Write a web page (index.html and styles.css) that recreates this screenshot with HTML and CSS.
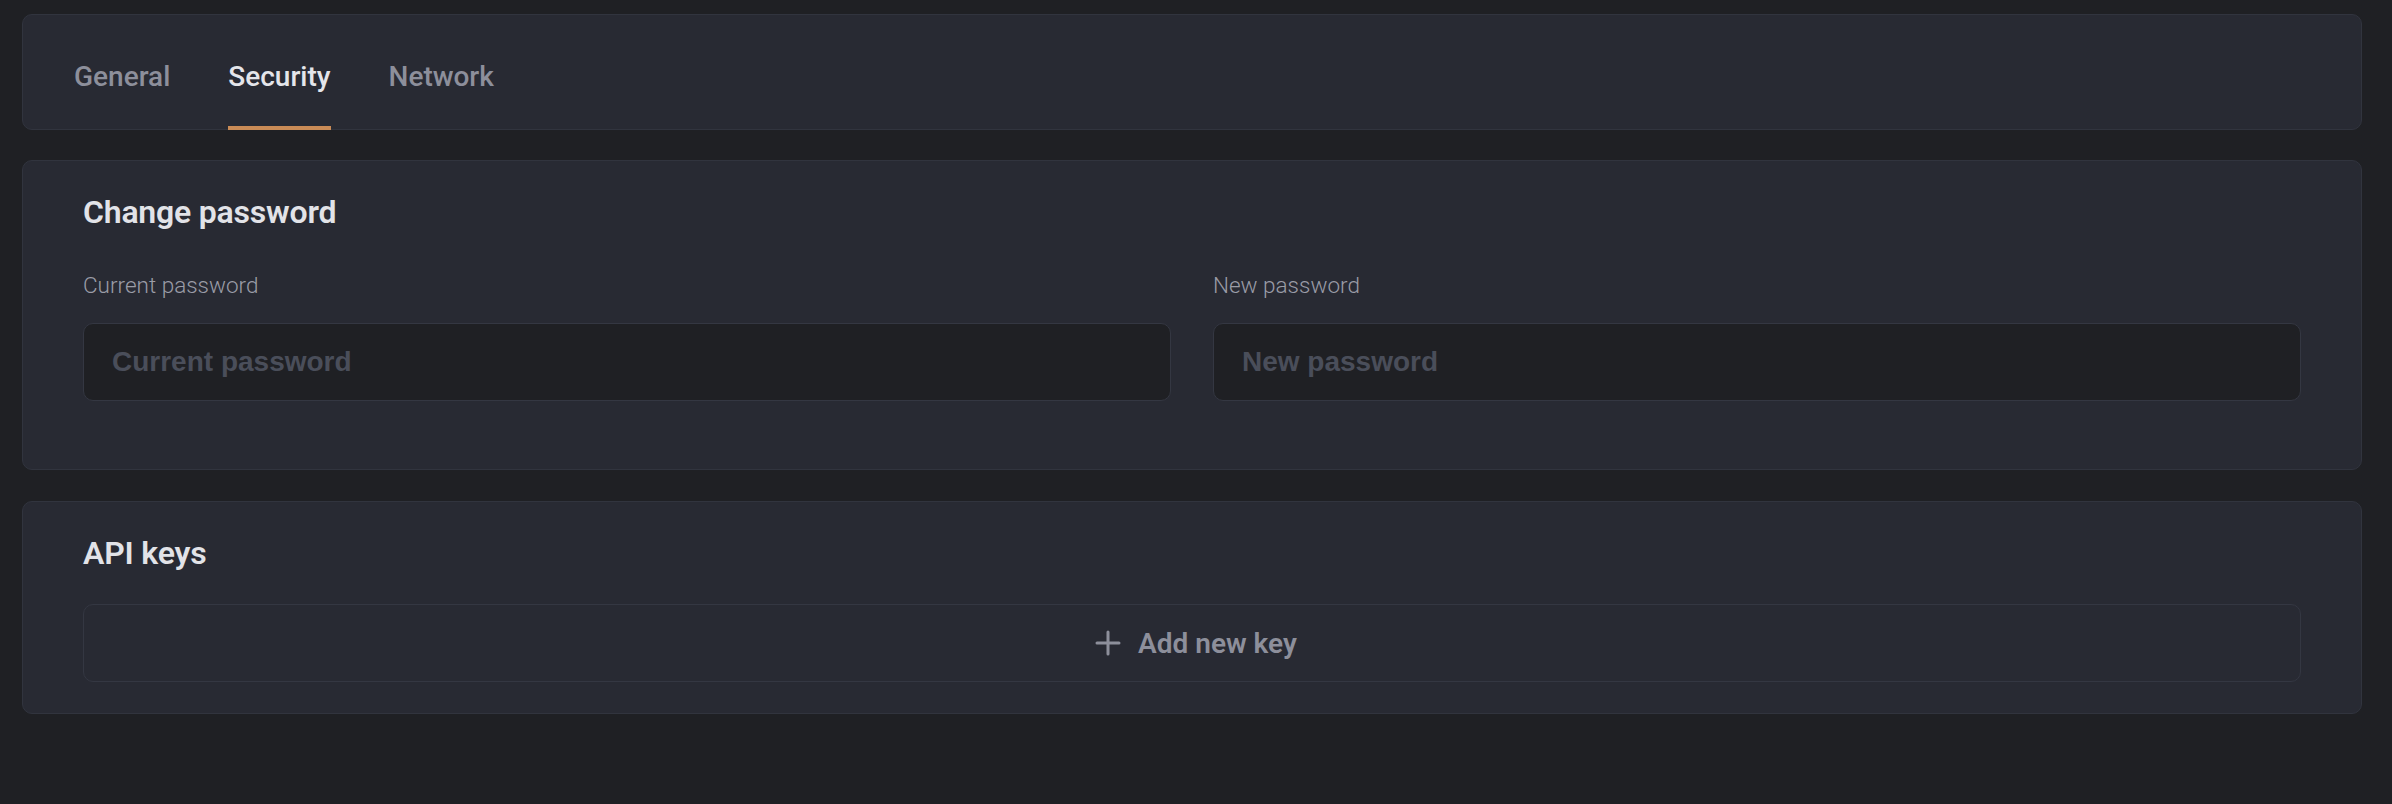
FILE: index.html
```html
<!DOCTYPE html>
<html lang="en">
<head>
    <meta charset="UTF-8">
    <meta name="viewport" content="width=device-width, initial-scale=1.0">
    <title>Settings</title>
    <link rel="stylesheet" href="styles.css">
</head>
<body>
    <nav class="settings-tabs" aria-label="Settings sections">
        <a href="#" class="settings-tab">General</a>
        <a href="#" class="settings-tab active" aria-current="page">Security</a>
        <a href="#" class="settings-tab">Network</a>
    </nav>

    <section class="panel">
        <h2 class="panel-title">Change password</h2>
        <div class="field-row">
            <div class="field">
                <label class="field-label" for="currentPassword">Current password</label>
                <input class="field-input" type="password" id="currentPassword" placeholder="Current password">
            </div>
            <div class="field">
                <label class="field-label" for="newPassword">New password</label>
                <input class="field-input" type="password" id="newPassword" placeholder="New password">
            </div>
        </div>
    </section>

    <section class="panel panel-keys">
        <h2 class="panel-title">API keys</h2>
        <button class="add-key" type="button">
            <svg class="add-key-icon" width="26" height="26" viewBox="0 0 26 26" aria-hidden="true">
                <path d="M13 2v22M2 13h22" stroke="currentColor" stroke-width="3" stroke-linecap="round" fill="none"/>
            </svg>
            <span>Add new key</span>
        </button>
    </section>
</body>
</html>
```

FILE: styles.css
```css
body {
    margin: 0;
    padding: 14px 30px 0 22px;
    background-color: #1f2024;
    font-family: Roboto, "Liberation Sans", sans-serif;
}

.settings-tabs {
    display: flex;
    gap: 58px;
    padding: 0 51px;
    background-color: #282a33;
    border: 1px solid #31343e;
    border-radius: 10px;
}

.settings-tab {
    padding: 45px 0 33px;
    margin-bottom: -1px;
    border-bottom: 4px solid transparent;
    color: #8d8f9b;
    font-size: 28px;
    font-weight: 500;
    text-decoration: none;
}

.settings-tab.active {
    color: #e4e5ea;
    border-bottom-color: #c98b56;
}

.panel {
    margin-top: 30px;
    padding: 32px 60px 68px;
    background-color: #282a33;
    border: 1px solid #31343e;
    border-radius: 10px;
}

.panel-keys {
    margin-top: 31px;
    padding-bottom: 31px;
}

.panel-title {
    margin: 0 0 40px;
    color: #e2e3e8;
    font-size: 32px;
    font-weight: 600;
    letter-spacing: -0.2px;
}

.panel-keys .panel-title {
    margin-bottom: 32px;
}

.field-row {
    display: flex;
    gap: 42px;
}

.field {
    flex: 1;
    display: flex;
    flex-direction: column;
}

.field-label {
    margin-top: 1px;
    margin-bottom: 25px;
    color: #9a9ca7;
    font-size: 22.5px;
    font-weight: 300;
}

.field-input {
    box-sizing: border-box;
    height: 78px;
    padding: 0 28px;
    background-color: #1f2024;
    border: 1px solid #343742;
    border-radius: 10px;
    color: #e2e3e8;
    font-family: "Liberation Sans", Arial, sans-serif;
    font-size: 28px;
    font-weight: 700;
    outline: none;
}

.field-input::placeholder {
    color: #4a4e5a;
}

.add-key {
    display: flex;
    align-items: center;
    justify-content: center;
    gap: 17px;
    width: 100%;
    height: 78px;
    padding: 0 0 0 8px;
    background-color: #282a33;
    border: 1px solid #343742;
    border-radius: 10px;
    color: #8d8f9b;
    font-family: Roboto, "Liberation Sans", sans-serif;
    font-size: 28px;
    font-weight: 600;
    cursor: pointer;
}

.add-key-icon {
    flex-shrink: 0;
}
```
